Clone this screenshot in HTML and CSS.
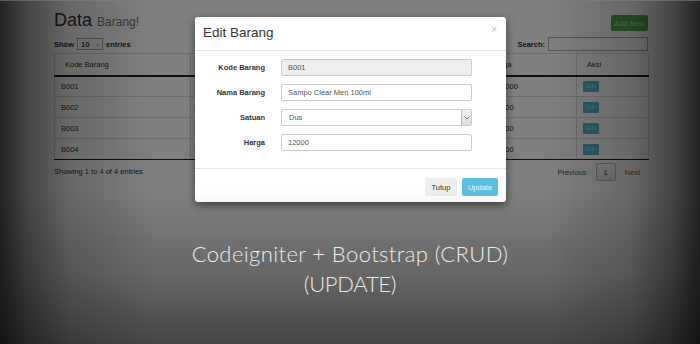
FILE: index.html
```html
<!DOCTYPE html>
<html>
<head>
<meta charset="utf-8">
<link rel="stylesheet" href="styles.css">
</head>
<body>
<div class="page">
  <div class="container">
    <div class="topbar">
      <h1>Data <small>Barang!</small></h1>
      <span class="btn btn-add">Add New</span>
    </div>
    <div class="controls">
      <div class="length">Show <span class="sel-sm">10 <span class="chev">&#8964;</span></span> entries</div>
      <div class="search">Search: <span class="search-input"></span></div>
    </div>
    <table class="grid">
      <thead>
        <tr><th class="c1">Kode Barang</th><th class="c2"></th><th class="c3"></th><th class="c4">Harga</th><th class="c5">Aksi</th></tr>
      </thead>
      <tbody>
        <tr><td>B001</td><td></td><td></td><td class="num">12000</td><td><span class="btn-edit">Edit</span></td></tr>
        <tr><td>B002</td><td></td><td></td><td class="num">5000</td><td><span class="btn-edit">Edit</span></td></tr>
        <tr><td>B003</td><td></td><td></td><td class="num">7500</td><td><span class="btn-edit">Edit</span></td></tr>
        <tr><td>B004</td><td></td><td></td><td class="num">9000</td><td><span class="btn-edit">Edit</span></td></tr>
      </tbody>
    </table>
    <div class="tfoot">
      <span>Showing 1 to 4 of 4 entries</span>
      <div class="paging"><span class="pg prev">Previous</span><span class="pg-cur">1</span><span class="pg next">Next</span></div>
    </div>
  </div>
</div>
<div class="backdrop"></div>
<div class="modal">
  <div class="modal-header">
    <span class="modal-title">Edit Barang</span>
    <span class="close">&times;</span>
  </div>
  <div class="modal-body">
    <label>Kode Barang</label><div class="input readonly">B001</div>
    <label>Nama Barang</label><div class="input">Sampo Clear Men 100ml</div>
    <label>Satuan</label><div class="input select"><span class="sel-text">Dus</span><span class="sel-btn"><svg width="6" height="4" viewBox="0 0 6 4"><path d="M0.5 0.5 L3 3 L5.5 0.5" fill="none" stroke="#666" stroke-width="0.9"/></svg></span></div>
    <label>Harga</label><div class="input">12000</div>
  </div>
  <div class="modal-footer">
    <span class="btn btn-default">Tutup</span>
    <span class="btn btn-info">Update</span>
  </div>
</div>
<div class="vignette"></div>
<div class="caption">
  <p>Codeigniter + Bootstrap (CRUD)</p>
  <p class="sub">(UPDATE)</p>
</div>
</body>
</html>
```
FILE: styles.css
```css
* { box-sizing: border-box; }
html, body { margin: 0; padding: 0; }
body {
  width: 700px;
  height: 344px;
  overflow: hidden;
  position: relative;
  background: #fff;
  font-family: "Liberation Sans", Arial, sans-serif;
  font-size: 7.5px;
  color: #333;
}
.page {
  padding: 0 52px 0 54px;
  height: 344px;
}
.container { width: 594px; }
.topbar {
  display: flex;
  justify-content: space-between;
  align-items: flex-start;
  height: 35px;
}
h1 {
  margin: 10px 0 0;
  font-size: 18px;
  font-weight: normal;
  line-height: 20px;
  color: #333;
}
h1 small { font-size: 12px; color: #777; }
.btn {
  display: inline-flex;
  align-items: center;
  justify-content: center;
  border-radius: 2px;
  font-size: 7.5px;
}
.btn-add {
  margin-top: 15px;
  width: 37px;
  height: 16px;
  background: #4cae4c;
  color: #bfe3bf;
}
.controls {
  display: flex;
  justify-content: space-between;
  align-items: center;
  height: 18px;
  font-weight: bold;
  font-size: 7.5px;
}
.length { display: flex; align-items: center; gap: 3px; }
.sel-sm {
  display: inline-flex;
  justify-content: space-between;
  align-items: center;
  width: 26px;
  height: 12px;
  border: 1px solid #aaa;
  background: #fff;
  padding: 0 2px 0 3px;
  font-weight: bold;
}
.chev { font-size: 6px; color: #888; line-height: 6px; }
.search { display: flex; align-items: center; gap: 3px; }
.search-input {
  display: inline-block;
  width: 100px;
  height: 14px;
  border: 1px solid #aaa;
  background: #fff;
}
table.grid {
  width: 594px;
  border-collapse: collapse;
  table-layout: fixed;
  margin-top: 0;
}
.grid th, .grid td {
  border-left: 1px solid #ddd;
  border-right: 1px solid #ddd;
  text-align: left;
  font-weight: normal;
  white-space: nowrap;
  overflow: hidden;
}
.grid th {
  height: 22px;
  padding: 0 10px;
  border-top: 1px solid #ddd;
  border-bottom: 2px solid #222;
  color: #333;
}
.grid th.c4 { padding-left: 0; }
.grid td {
  height: 21px;
  padding: 0 6px;
  border-top: 1px solid #ddd;
}
.grid tbody tr:last-child td { border-bottom: 1px solid #222; }
.c1 { width: 136px; }
.c2 { width: 160px; }
.c3 { width: 140px; }
.c4 { width: 86px; }
.c5 { width: 72px; }
.btn-edit {
  display: inline-flex;
  align-items: center;
  justify-content: center;
  width: 16px;
  height: 11px;
  background: #4fb8d8;
  color: #a8dcea;
  font-size: 6px;
  border-radius: 1px;
}
.tfoot {
  display: flex;
  justify-content: space-between;
  align-items: flex-start;
  padding-top: 3px;
}
.tfoot > span { margin-top: 4px; }
.paging { display: flex; align-items: center; margin-right: 8px; }
.pg { color: #555; }
.pg.prev { padding-right: 9px; }
.pg.next { padding-left: 9px; }
.pg-cur {
  display: inline-flex;
  align-items: center;
  justify-content: center;
  width: 20px;
  height: 18px;
  border: 1px solid #bbb;
  border-radius: 2px;
  background: linear-gradient(#fff, #e8e8e8);
  color: #333;
}
.backdrop {
  position: absolute;
  inset: 0;
  background: rgba(0, 0, 0, 0.5);
}
.modal {
  position: absolute;
  left: 195px;
  top: 17px;
  width: 311px;
  height: 185px;
  background: #fff;
  border-radius: 3px;
  box-shadow: 0 3px 9px rgba(0, 0, 0, 0.5);
  display: flex;
  flex-direction: column;
}
.modal-header {
  height: 34px;
  border-bottom: 1px solid #e5e5e5;
  display: flex;
  justify-content: space-between;
  align-items: flex-start;
  padding: 8px 9px 0 8px;
}
.modal-title {
  font-size: 13.5px;
  line-height: 16px;
  color: #333;
}
.close {
  font-size: 10px;
  color: #bbb;
  line-height: 10px;
  margin-top: 0;
}
.modal-body {
  display: grid;
  grid-template-columns: 60px 191px;
  column-gap: 16px;
  row-gap: 8px;
  align-items: center;
  padding: 8px 10px 0;
  height: 117px;
  align-content: start;
}
.modal-body label {
  text-align: right;
  font-weight: bold;
  font-size: 7.5px;
  color: #333;
}
.input {
  height: 17px;
  border: 1px solid #ccc;
  border-radius: 2px;
  display: flex;
  align-items: center;
  padding-left: 6px;
  color: #555;
  font-size: 7.5px;
  background: #fff;
}
.input.readonly { background: #eee; }
.input.select { justify-content: space-between; padding-right: 0; padding-left: 7px; }
.sel-btn {
  width: 10px;
  height: 15px;
  background: linear-gradient(#f4f4f4, #ddd);
  border-left: 1px solid #bbb;
  display: flex;
  align-items: center;
  justify-content: center;
}
.modal-footer {
  flex: 1;
  border-top: 1px solid #e5e5e5;
  display: flex;
  justify-content: flex-end;
  align-items: flex-start;
  gap: 5px;
  padding: 9px 8px 0;
}
.btn-default {
  width: 32px;
  height: 18px;
  background: #eee;
  color: #333;
}
.btn-info {
  width: 36px;
  height: 18px;
  background: #5bc0de;
  color: #e6f6fb;
}
.vignette {
  position: absolute;
  inset: 0;
  border-top: 1px solid rgba(255, 255, 255, 0.3);
  background:
    linear-gradient(to right, rgba(0,0,0,0.72) 0%, rgba(0,0,0,0.45) 4%, rgba(0,0,0,0.18) 10%, rgba(0,0,0,0) 22%, rgba(0,0,0,0) 78%, rgba(0,0,0,0.18) 90%, rgba(0,0,0,0.45) 96%, rgba(0,0,0,0.72) 100%),
    linear-gradient(to bottom, rgba(0,0,0,0) 55%, rgba(0,0,0,0.2) 80%, rgba(0,0,0,0.45) 100%);
}
.caption {
  position: absolute;
  left: 0;
  right: 0;
  top: 239px;
  text-align: center;
  color: #ececec;
  font-family: Lato, "Open Sans", sans-serif;
  font-weight: 300;
  font-size: 22px;
  letter-spacing: 0.4px;
  line-height: 30px;
}
.caption p { margin: 0; }
.caption .sub { letter-spacing: -0.3px; }
```
